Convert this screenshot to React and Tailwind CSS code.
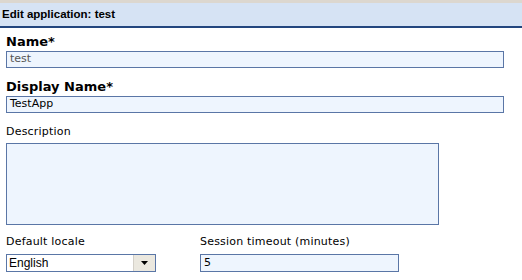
export default function App() {
  return (
    <div className="w-[522px] h-[280px] bg-white overflow-hidden" style={{ fontFamily: '"DejaVu Sans", Verdana, sans-serif' }}>
      {/* Header */}
      <div className="border-t-[3px] border-t-[#dcd7cf] border-b-2 border-b-[#23467e] bg-[#d6e3f4] h-[28px] flex items-center pl-[2px]">
        <span className="text-[11.5px] font-bold text-black" style={{ fontFamily: '"Liberation Sans", Arial, sans-serif' }}>
          Edit application: test
        </span>
      </div>

      <div className="pl-[6px]">
        <div className="mt-[6px] text-[13px] font-bold leading-[16px] text-black">Name*</div>
        <div className="mt-px w-[498px] h-[17px] border border-[#5a76a6] bg-[#eef5fe] flex items-center pl-[3px] text-[11px] text-[#555]">
          test
        </div>

        <div className="mt-[11px] text-[13px] font-bold leading-[16px] text-black">Display Name*</div>
        <div className="mt-px w-[498px] h-[17px] border border-[#5a76a6] bg-[#eef5fe] flex items-center pl-[3px] text-[11px] text-black">
          TestApp
        </div>

        <div className="mt-[12px] text-[11px] tracking-[0.2px] leading-[14px] text-black">Description</div>
        <div className="mt-[4px] w-[433px] h-[82px] border border-[#5a76a6] bg-[#eef5fe]" />

        <div className="mt-[10px] flex gap-[44px]">
          <div className="flex flex-col">
            <div className="text-[11px] tracking-[0.2px] leading-[14px] text-black">Default locale</div>
            <div className="mt-[5px] w-[150px] h-[18px] border border-[#5a76a6] bg-white flex items-stretch">
              <div className="flex-1 flex items-center pl-[2px] text-[12px] text-black" style={{ fontFamily: '"Liberation Sans", Arial, sans-serif' }}>
                English
              </div>
              <div className="w-[22px] bg-[#ebe8df] border-l border-[#d4d0c8] flex items-center justify-center">
                <svg width="7" height="4" viewBox="0 0 7 4">
                  <path d="M0 0h7L3.5 4z" fill="#000" />
                </svg>
              </div>
            </div>
          </div>
          <div className="flex flex-col">
            <div className="text-[11px] tracking-[0.2px] leading-[14px] text-black">Session timeout (minutes)</div>
            <div className="mt-[5px] w-[199px] h-[18px] border border-[#5a76a6] bg-[#eef5fe] flex items-center pl-[3px] text-[11px] text-black">
              5
            </div>
          </div>
        </div>
      </div>
    </div>
  )
}
